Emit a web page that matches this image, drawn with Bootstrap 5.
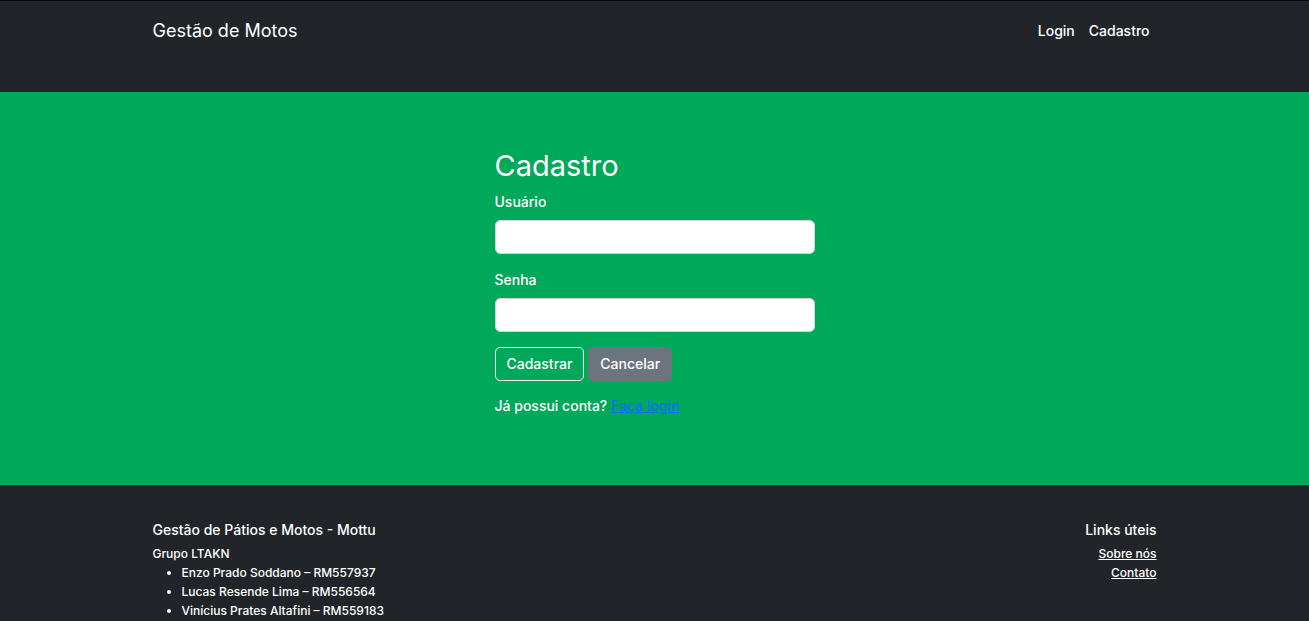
<!DOCTYPE html>
<html lang="pt-br">
<head>
<meta charset="utf-8">
<meta name="viewport" content="width=device-width, initial-scale=1">
<title>Cadastro - Gestão de Motos</title>
<link href="https://cdn.jsdelivr.net/npm/bootstrap@5.3.0/dist/css/bootstrap.min.css" rel="stylesheet">
<style>
  body { font-family: Inter, "Liberation Sans", sans-serif; font-size: 14px; font-weight: 500; line-height: 22px; background: #00a859; }
  .page-width { max-width: 1026px; padding-left: 11px; padding-right: 11px; }
  .site-header { border-top: 1px solid #08080c; padding: 5px 0 36px; }
  .site-header .navbar { padding: 7px 0; --bs-navbar-nav-link-padding-x: 7px; }
  .site-header .navbar-brand { font-size: 18px; font-weight: 400; line-height: 26px; padding: 4px 0; color: #fff; }
  .site-header .nav-link { padding-top: 7px; padding-bottom: 7px; font-weight: 500; color: #fff; }
  .signup { padding: 57px 0 68px; }
  .signup .row, .site-footer .row { --bs-gutter-x: 22px; }
  .signup h1 { font-size: 29px; font-weight: 400; line-height: 34px; margin-bottom: 8px; }
  .signup .form-label { margin-bottom: 7px; }
  .signup .field { margin-bottom: 15px; }
  .signup .form-control { height: 34px; font-size: 14px; border-color: #ced4da; border-radius: 5px; }
  .signup .btn { font-size: 14px; font-weight: 500; line-height: 22px; padding: 5px 11px; border-radius: 5px; }
  .signup .btn-outline-light { --bs-btn-color: #fff; --bs-btn-border-color: #fff; }
  .signup .btn-secondary { --bs-btn-bg: #6c757d; }
  .signup p { margin: 14px 0 0; }
  .signup p a { color: #0d6efd; }
  .site-footer { padding: 36px 0 0; font-size: 12px; line-height: 19px; }
  .site-footer h2 { font-size: 14px; font-weight: 500; line-height: 17px; margin-bottom: 6px; }
  .site-footer ul { padding-left: 29px; }
</style>
</head>
<body class="d-flex flex-column min-vh-100 text-white">
<header class="site-header bg-dark">
  <nav class="navbar navbar-expand navbar-dark">
    <div class="container page-width">
      <a class="navbar-brand" href="#">Gestão de Motos</a>
      <div class="navbar-nav ms-auto">
        <a class="nav-link" href="#">Login</a>
        <a class="nav-link" href="#">Cadastro</a>
      </div>
    </div>
  </nav>
</header>

<main class="signup">
  <div class="container page-width">
    <div class="row justify-content-center">
      <div class="col-sm-8 col-md-4">
        <h1>Cadastro</h1>
        <form>
          <div class="field">
            <label class="form-label d-block" for="usuario">Usuário</label>
            <input class="form-control" type="text" id="usuario" name="usuario">
          </div>
          <div class="field">
            <label class="form-label d-block" for="senha">Senha</label>
            <input class="form-control" type="password" id="senha" name="senha">
          </div>
          <div class="d-flex gap-1">
            <button class="btn btn-outline-light" type="submit">Cadastrar</button>
            <button class="btn btn-secondary" type="button">Cancelar</button>
          </div>
        </form>
        <p>Já possui conta? <a href="#">Faça login</a></p>
      </div>
    </div>
  </div>
</main>

<footer class="site-footer bg-dark flex-grow-1">
  <div class="container page-width">
    <div class="row">
      <div class="col-6">
        <h2>Gestão de Pátios e Motos - Mottu</h2>
        <div>Grupo LTAKN</div>
        <ul class="mb-0">
          <li>Enzo Prado Soddano – RM557937</li>
          <li>Lucas Resende Lima – RM556564</li>
          <li>Vinícius Prates Altafini – RM559183</li>
        </ul>
      </div>
      <div class="col-6 text-end">
        <h2>Links úteis</h2>
        <div><a class="text-white" href="#">Sobre nós</a></div>
        <div><a class="text-white" href="#">Contato</a></div>
      </div>
    </div>
  </div>
</footer>
<script src="https://cdn.jsdelivr.net/npm/bootstrap@5.3.0/dist/js/bootstrap.bundle.min.js"></script>
</body>
</html>
